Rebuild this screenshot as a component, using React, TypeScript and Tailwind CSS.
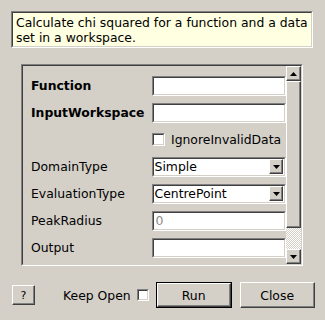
import React from "react";

const sunkenOuter = "border border-t-[#808080] border-l-[#808080] border-b-white border-r-white";
const sunkenInner = "border border-t-[#404040] border-l-[#404040] border-b-[#d4d0c8] border-r-[#d4d0c8]";
const raised = "border border-t-white border-l-white border-b-[#404040] border-r-[#404040] shadow-[inset_-1px_-1px_0_#808080]";

function Arrow({ up }: { up?: boolean }) {
  return (
    <svg width="7" height="4" viewBox="0 0 7 4">
      {up ? <polygon points="3.5,0 7,4 0,4" fill="#000" /> : <polygon points="0,0 7,0 3.5,4" fill="#000" />}
    </svg>
  );
}

function TextInput({ value, disabled }: { value?: string; disabled?: boolean }) {
  return (
    <div className={`w-[135px] h-[20px] ${sunkenOuter}`}>
      <div className={`w-full h-full bg-white ${sunkenInner} flex items-center pl-[2px] ${disabled ? "text-[#8a8a8a]" : "text-black"}`}>
        {value}
      </div>
    </div>
  );
}

function Combo({ value }: { value: string }) {
  return (
    <div className={`w-[135px] h-[20px] ${sunkenOuter}`}>
      <div className={`w-full h-full bg-white ${sunkenInner} flex items-center`}>
        <span className="flex-1 pl-[1px]">{value}</span>
        <div className={`w-[14px] h-[15px] bg-[#d4d0c8] ${raised} flex items-center justify-center mr-[1px]`}>
          <Arrow />
        </div>
      </div>
    </div>
  );
}

function Row({ label, bold, children }: { label?: string; bold?: boolean; children: React.ReactNode }) {
  return (
    <div className="h-[27px] flex items-center">
      <div className={`w-[121px] whitespace-nowrap ${bold ? "font-bold" : ""}`}>{label}</div>
      {children}
    </div>
  );
}

export default function App() {
  return (
    <div
      className="w-[325px] h-[320px] bg-[#d4d0c8] text-black text-[12.4px] leading-[15px] flex flex-col pt-[11px]"
      style={{ fontFamily: '"DejaVu Sans", sans-serif' }}
    >
      <div className={`ml-[11px] w-[302px] h-[37px] ${sunkenOuter}`}>
        <div className="w-full h-full bg-[#ffffe1] border border-t-[#404040] border-l-[#404040] border-b-[#d4d0c8] border-r-[#d4d0c8] px-[3px] pt-[2px]">
          Calculate chi squared for a function and a data set in a workspace.
        </div>
      </div>

      <div className={`ml-[21px] mt-[16px] w-[282px] h-[202px] ${sunkenOuter}`}>
        <div className="w-full h-full border border-t-[#404040] border-l-[#404040] border-b-[#d4d0c8] border-r-[#d4d0c8] flex">
          <div className="flex-1 pl-[8px] pt-[6px] overflow-hidden">
            <Row label="Function" bold>
              <TextInput />
            </Row>
            <Row label="InputWorkspace" bold>
              <TextInput />
            </Row>
            <Row>
              <div className="flex items-center gap-[6px]">
                <div className={`w-[13px] h-[13px] ${sunkenOuter}`}>
                  <div className={`w-full h-full bg-white ${sunkenInner}`} />
                </div>
                <span>IgnoreInvalidData</span>
              </div>
            </Row>
            <Row label="DomainType">
              <Combo value="Simple" />
            </Row>
            <Row label="EvaluationType">
              <Combo value="CentrePoint" />
            </Row>
            <Row label="PeakRadius">
              <TextInput value="0" disabled />
            </Row>
            <Row label="Output">
              <TextInput />
            </Row>
          </div>
          <div className="w-[15px] flex flex-col">
            <div className={`h-[15px] bg-[#d4d0c8] ${raised} flex items-center justify-center`}>
              <Arrow up />
            </div>
            <div className={`h-[147px] bg-[#d4d0c8] ${raised}`} />
            <div className="flex-1 bg-[repeating-conic-gradient(#d4d0c8_0_25%,#ffffff_0_50%)] bg-[length:2px_2px]" />
            <div className={`h-[15px] bg-[#d4d0c8] ${raised} flex items-center justify-center`}>
              <Arrow />
            </div>
          </div>
        </div>
      </div>

      <div className="flex items-center mt-[16px] h-[26px]">
        <div className={`ml-[12px] w-[23px] h-[20px] bg-[#d4d0c8] ${raised} flex items-center justify-center text-[11px]`}>
          ?
        </div>
        <span className="ml-[28px]">Keep Open</span>
        <div className={`ml-[6px] w-[12px] h-[12px] ${sunkenOuter}`}>
          <div className={`w-full h-full bg-white ${sunkenInner}`} />
        </div>
        <div className="ml-[7px] w-[76px] h-[26px] border border-black">
          <div className={`w-full h-full bg-[#d4d0c8] ${raised} flex items-center justify-center`}>Run</div>
        </div>
        <div className={`ml-[8px] w-[75px] h-[26px] bg-[#d4d0c8] ${raised} flex items-center justify-center`}>
          Close
        </div>
      </div>
    </div>
  );
}
